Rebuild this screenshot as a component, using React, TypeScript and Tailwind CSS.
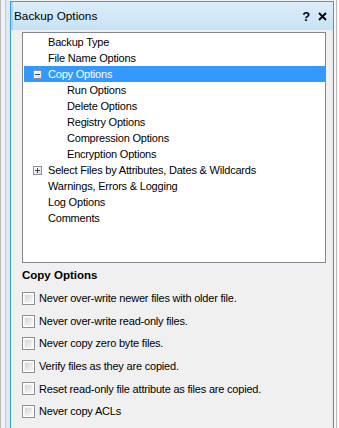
import React from 'react';

const font = { fontFamily: '"Liberation Sans", Arial, sans-serif' };

type Node = { label: string; level: 0 | 1; expander?: 'minus' | 'plus'; selected?: boolean };

const tree: Node[] = [
  { label: 'Backup Type', level: 0 },
  { label: 'File Name Options', level: 0 },
  { label: 'Copy Options', level: 0, expander: 'minus', selected: true },
  { label: 'Run Options', level: 1 },
  { label: 'Delete Options', level: 1 },
  { label: 'Registry Options', level: 1 },
  { label: 'Compression Options', level: 1 },
  { label: 'Encryption Options', level: 1 },
  { label: 'Select Files by Attributes, Dates & Wildcards', level: 0, expander: 'plus' },
  { label: 'Warnings, Errors & Logging', level: 0 },
  { label: 'Log Options', level: 0 },
  { label: 'Comments', level: 0 },
];

const options = [
  'Never over-write newer files with older file.',
  'Never over-write read-only files.',
  'Never copy zero byte files.',
  'Verify files as they are copied.',
  'Reset read-only file attribute as files are copied.',
  'Never copy ACLs',
];

function Expander({ kind }: { kind: 'minus' | 'plus' }) {
  return (
    <div className="w-[9px] h-[9px] border border-[#919191] bg-gradient-to-br from-white to-[#dcdcdc] flex items-center justify-center relative">
      <div className="w-[5px] h-[1px] bg-[#2b4a7a]" />
      {kind === 'plus' && <div className="absolute w-[1px] h-[5px] bg-[#2b4a7a]" />}
    </div>
  );
}

function Checkbox() {
  return (
    <div className="w-[13px] h-[13px] border border-[#8e8f8f] bg-white p-[1px] shrink-0">
      <div className="w-full h-full bg-gradient-to-br from-[#d4d4d4] to-[#f6f6f6] border border-[#f4f4f4]" />
    </div>
  );
}

export default function App() {
  return (
    <div className="w-[339px] h-[428px] overflow-hidden bg-[#f0f0f0] flex text-[11px] tracking-[-0.2px] text-black" style={font}>
      {/* left window chrome */}
      <div className="w-[10px] h-full flex shrink-0">
        <div className="w-[1px] bg-[#b8b8b8]" />
        <div className="w-[4px] bg-[#eef2f6]" />
        <div className="w-[1px] bg-[#c6cdd6]" />
        <div className="w-[4px] bg-[#dde8f3]" />
      </div>

      {/* docked panel */}
      <div className="w-[324px] h-full shrink-0 border-x border-t border-[#3c9be6] mt-[1px] flex flex-col">
        <div className="h-[28px] shrink-0 flex items-center pl-[1px] pr-[5px] bg-gradient-to-b from-[#dcedf9] to-[#c7e2f5] border-l-[2px] border-[#a9d4f3]">
          <span className="text-[11.8px] tracking-normal flex-1 pt-[1px]">Backup Options</span>
          <span className="font-bold text-[13px] mr-[8px] leading-none">?</span>
          <svg width="9" height="9" viewBox="0 0 9 9" className="mr-[1px]">
            <path d="M1 1 L8 8 M8 1 L1 8" stroke="#000" strokeWidth="1.8" />
          </svg>
        </div>

        <div className="flex-1 pl-[11px] pr-[6px] pt-[2px] border-r border-[#e4e4e4]">
          {/* tree */}
          <div className="h-[231px] border border-[#828790] bg-white pt-[1px] pl-[1px]">
            {tree.map((n, i) => (
              <div
                key={i}
                className={`h-[16px] flex items-center ${n.selected ? 'bg-[#3399ff] text-white' : ''}`}
              >
                <div className="w-[9px] shrink-0" />
                <div className="w-[15px] shrink-0 flex items-center">
                  {n.expander && <Expander kind={n.expander} />}
                </div>
                {n.level === 1 && <div className="w-[19px] shrink-0" />}
                <span className="whitespace-nowrap">{n.label}</span>
              </div>
            ))}
          </div>

          {/* option pane */}
          <div className="font-bold text-[11.5px] tracking-normal mt-[6px] h-[14px] flex items-center">Copy Options</div>
          <div className="mt-[9px]">
            {options.map((o) => (
              <div key={o} className="h-[22.6px]">
                <div className="h-[13px] flex items-center">
                  <Checkbox />
                  <span className="ml-[4px] whitespace-nowrap">{o}</span>
                </div>
              </div>
            ))}
          </div>
        </div>
      </div>

      {/* right chrome */}
      <div className="flex-1 flex">
        <div className="w-[2px] bg-[#f7f7f7]" />
        <div className="w-[1px] bg-[#b9b9b9]" />
        <div className="flex-1 bg-[#fafafa]" />
      </div>
    </div>
  );
}
